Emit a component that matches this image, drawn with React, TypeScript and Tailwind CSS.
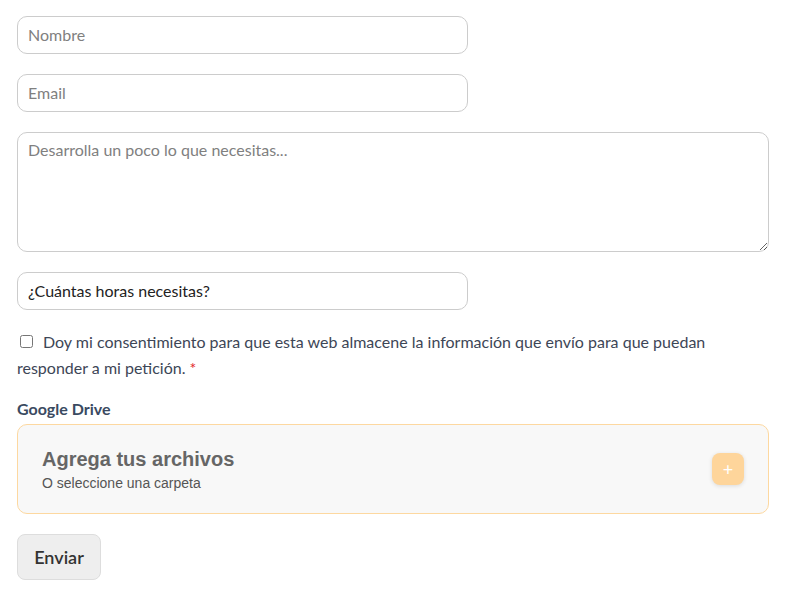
import React from 'react'

const font = { fontFamily: 'Lato, "Noto Sans", sans-serif' }

export default function App() {
  return (
    <div className="bg-white min-h-screen px-[17px] pt-[16px]" style={font}>
      <form className="flex flex-col" onSubmit={(e) => e.preventDefault()}>
        <input
          type="text"
          placeholder="Nombre"
          className="w-[451px] h-[38px] rounded-[10px] border border-[#cccccc] px-[10px] pb-[2px] text-[16px] text-[#333] placeholder:text-[#808080] outline-none"
        />
        <input
          type="email"
          placeholder="Email"
          className="mt-[20px] w-[451px] h-[38px] rounded-[10px] border border-[#cccccc] px-[10px] pb-[2px] text-[16px] text-[#333] placeholder:text-[#808080] outline-none"
        />
        <textarea
          placeholder="Desarrolla un poco lo que necesitas..."
          className="mt-[20px] w-[752px] h-[120px] rounded-[10px] border border-[#cccccc] px-[10px] py-[5px] text-[16px] text-[#333] placeholder:text-[#808080] outline-none"
        />
        <input
          type="text"
          defaultValue="¿Cuántas horas necesitas?"
          className="mt-[20px] w-[451px] h-[38px] rounded-[10px] border border-[#cccccc] px-[10px] pb-[2px] text-[16px] text-[#222] outline-none"
        />

        {/* consent */}
        <div className="mt-[19px] text-[16px] leading-[26px] text-[#3d4656]">
          <input type="checkbox" className="ml-[3px] mr-[10px] w-[13px] h-[13px] align-middle relative top-[-2px]" />
          Doy mi consentimiento para que esta web almacene la información que envío para que puedan
          responder a mi petición. <span className="text-[#e2252b]">*</span>
        </div>

        <div className="mt-[18px] text-[16px] font-bold text-[#3a4a61] leading-[20px]">Google Drive</div>

        <div className="mt-[5px] w-[752px] h-[90px] rounded-[10px] border border-[#fdd8a0] bg-[#f8f8f8] flex items-center justify-between pl-[24px] pr-[24px]">
          <div className="flex flex-col pt-[1px]" style={{ fontFamily: '"Liberation Sans", Arial, sans-serif' }}>
            <span className="text-[20px] font-bold text-[#666666] leading-[24px]">Agrega tus archivos</span>
            <span className="mt-[3px] text-[14px] text-[#555555] leading-[18px]">O seleccione una carpeta</span>
          </div>
          <button
            type="button"
            className="w-[32px] h-[32px] rounded-[8px] bg-[#fed59b] shadow-[0_1px_4px_rgba(0,0,0,0.12)] flex items-center justify-center text-white text-[18px] leading-none"
          >
            +
          </button>
        </div>

        <button
          type="submit"
          className="mt-[20px] w-[84px] h-[46px] rounded-[8px] border border-[#dddddd] bg-[#eeeeee] text-[18px] font-semibold text-[#333333]"
        >
          Enviar
        </button>
      </form>
    </div>
  )
}
